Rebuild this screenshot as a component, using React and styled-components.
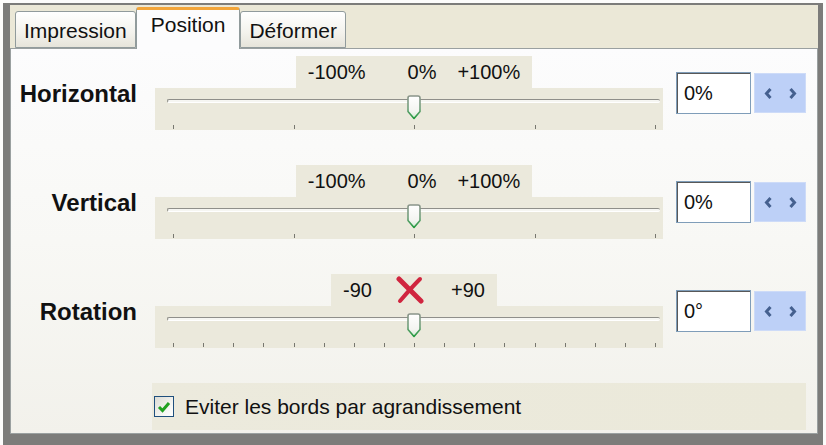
import React from "react";
import styled, { createGlobalStyle } from "styled-components";

const Global = createGlobalStyle`
  html, body {
    margin: 0;
    padding: 0;
    background: #fcfcfb;
  }
  body {
    font-family: "Liberation Sans", Arial, sans-serif;
    color: #111;
  }
`;

const Frame = styled.div`
  box-sizing: border-box;
  margin: 3px 0 0 3px;
  width: 820px;
  height: 442px;
  border-style: solid;
  border-color: #7c7c7a;
  border-width: 2px 5px 11px 7px;
  display: flex;
  flex-direction: column;
  background: #ebe8d7;
`;

const TabStrip = styled.div`
  height: 43px;
  flex: none;
  display: flex;
  align-items: flex-end;
  padding-left: 5px;
  background: #ebe8d7;
  position: relative;
  z-index: 1;
`;

const Tab = styled.div`
  box-sizing: border-box;
  height: ${(p) => (p.$active ? 42 : 37)}px;
  margin-bottom: ${(p) => (p.$active ? -1 : 0)}px;
  padding: ${(p) => (p.$active ? "4px 14px 0" : "8px 8px 0")};
  border: 1px solid #919b9c;
  border-top: ${(p) => (p.$active ? "3px solid #f2a53a" : "1px solid #919b9c")};
  border-bottom: ${(p) => (p.$active ? "none" : "1px solid #919b9c")};
  border-radius: 3px 3px 0 0;
  background: ${(p) =>
    p.$active ? "#fcfcfd" : "linear-gradient(#ffffff, #f3f2ec 60%, #e6e4da)"};
  font-size: 21px;
  line-height: 21px;
  white-space: nowrap;
`;

const Panel = styled.div`
  flex: 1;
  box-sizing: border-box;
  border: 1px solid #9aa0a0;
  background: linear-gradient(#fcfcfd, #f8f8f5 50%, #f2f1eb);
  padding: 7px 0 3px;
  display: flex;
  flex-direction: column;
  gap: 35px;
`;

const Row = styled.div`
  display: flex;
  align-items: flex-start;
  height: 74px;
`;

const Label = styled.div`
  width: 126px;
  margin: 26px 18px 0 0;
  text-align: right;
  font-weight: bold;
  font-size: 24px;
  line-height: 24px;
`;

const SliderColumn = styled.div`
  width: 518px;
  display: flex;
  flex-direction: column;
  align-items: center;
`;

const ScaleBox = styled.div`
  box-sizing: border-box;
  height: 32px;
  padding: 0 12px;
  display: flex;
  align-items: center;
  background: #ebe9dc;
  font-size: 20px;
  line-height: 20px;
`;

const ScaleMark = styled.span`
  margin-left: ${(p) => p.$gap || 0}px;
  display: flex;
  align-items: center;
`;

const SliderBox = styled.div`
  align-self: flex-start;
  box-sizing: border-box;
  width: 508px;
  height: 42px;
  padding-top: 11px;
  background: #ebe9dc;
`;

const Track = styled.div`
  position: relative;
  box-sizing: border-box;
  height: 4px;
  margin: 0 3px 0 12px;
  border-top: 1px solid #8f8f8a;
  border-left: 1px solid #8f8f8a;
  border-bottom: 1px solid #ffffff;
  border-radius: 2px;
  background: #f6f6f2;
`;

const Thumb = styled.svg`
  position: absolute;
  top: -5px;
  left: 50%;
  transform: translateX(-50%);
`;

const TickRow = styled.div`
  display: flex;
  justify-content: space-between;
  margin: 22px 7px 0 18px;
`;

const Tick = styled.span`
  width: 1px;
  height: 4px;
  background: #77776f;
`;

const ValueBox = styled.div`
  box-sizing: border-box;
  width: 75px;
  height: 42px;
  margin: 16px 0 0 3px;
  padding-left: 7px;
  display: flex;
  align-items: center;
  border: 1px solid #7f9db9;
  box-shadow: inset 1px 1px 0 #585858;
  background: #ffffff;
  font-size: 20px;
`;

const Spin = styled.div`
  box-sizing: border-box;
  width: 52px;
  height: 40px;
  margin: 17px 0 0 3px;
  display: flex;
  align-items: center;
  justify-content: center;
  gap: 15px;
  background: #bdd0f7;
  border: 1px solid #cddbf8;
`;

const CheckRow = styled.div`
  box-sizing: border-box;
  width: 654px;
  height: 47px;
  margin-left: 141px;
  padding-left: 2px;
  display: flex;
  align-items: center;
  background: linear-gradient(90deg, #eceadd, #ebe9da);
`;

const CheckBox = styled.span`
  box-sizing: border-box;
  width: 20px;
  height: 21px;
  display: flex;
  align-items: center;
  justify-content: center;
  border: 1px solid #1f4f7d;
  background: linear-gradient(135deg, #dcdcd5, #f7f7f4 70%, #ffffff);
`;

const CheckText = styled.span`
  margin-left: 11px;
  font-size: 21px;
`;

const ThumbIcon = () => (
  <Thumb width="15" height="25" viewBox="0 0 15 25">
    <defs>
      <linearGradient id="thumbStroke" x1="0" y1="0" x2="0" y2="1">
        <stop offset="0" stopColor="#8a948a" />
        <stop offset="0.55" stopColor="#6fa07a" />
        <stop offset="1" stopColor="#1f9a3c" />
      </linearGradient>
      <linearGradient id="thumbFill" x1="0" y1="0" x2="0" y2="1">
        <stop offset="0" stopColor="#ffffff" />
        <stop offset="0.7" stopColor="#f3f4f0" />
        <stop offset="1" stopColor="#cfe9d2" />
      </linearGradient>
    </defs>
    <path
      d="M1.5 3 Q1.5 1 3.5 1 H11.5 Q13.5 1 13.5 3 V16.5 L7.5 23.5 L1.5 16.5 Z"
      fill="url(#thumbFill)"
      stroke="url(#thumbStroke)"
      strokeWidth="1.6"
      strokeLinejoin="round"
    />
  </Thumb>
);

const Chevron = ({ dir }) => (
  <svg width="9" height="13" viewBox="0 0 9 13">
    <path
      d={dir === "left" ? "M6.5 2 L2.5 6.5 L6.5 11" : "M2.5 2 L6.5 6.5 L2.5 11"}
      fill="none"
      stroke="#45608f"
      strokeWidth="3"
    />
  </svg>
);

const CrossIcon = () => (
  <svg width="28" height="28" viewBox="0 0 28 28">
    <path d="M3 3 C10 10 18 18 25 25" stroke="#d0253f" strokeWidth="5" strokeLinecap="round" fill="none" />
    <path d="M24 3 C17 10 10 18 4 25" stroke="#d0253f" strokeWidth="4" strokeLinecap="round" fill="none" />
  </svg>
);

const CheckMark = () => (
  <svg width="14" height="14" viewBox="0 0 14 14">
    <path d="M2 7 L5.5 10.5 L12 3" fill="none" stroke="#21a121" strokeWidth="3" />
  </svg>
);

const sliders = [
  {
    label: "Horizontal",
    value: "0%",
    ticks: 5,
    marks: [
      { text: "-100%" },
      { text: "0%", gap: 42 },
      { text: "+100%", gap: 21 },
    ],
  },
  {
    label: "Vertical",
    value: "0%",
    ticks: 5,
    marks: [
      { text: "-100%" },
      { text: "0%", gap: 42 },
      { text: "+100%", gap: 21 },
    ],
  },
  {
    label: "Rotation",
    value: "0°",
    ticks: 17,
    marks: [
      { text: "-90" },
      { icon: true, gap: 24 },
      { text: "+90", gap: 27 },
    ],
  },
];

const SliderRow = ({ label, value, ticks, marks }) => (
  <Row>
    <Label>{label}</Label>
    <SliderColumn>
      <ScaleBox>
        {marks.map((m, i) => (
          <ScaleMark key={i} $gap={m.gap}>
            {m.icon ? <CrossIcon /> : m.text}
          </ScaleMark>
        ))}
      </ScaleBox>
      <SliderBox>
        <Track>
          <ThumbIcon />
        </Track>
        <TickRow>
          {Array.from({ length: ticks }, (_, i) => (
            <Tick key={i} />
          ))}
        </TickRow>
      </SliderBox>
    </SliderColumn>
    <ValueBox>{value}</ValueBox>
    <Spin>
      <Chevron dir="left" />
      <Chevron dir="right" />
    </Spin>
  </Row>
);

export default function App() {
  return (
    <>
      <Global />
      <Frame>
        <TabStrip>
          <Tab>Impression</Tab>
          <Tab $active>Position</Tab>
          <Tab>Déformer</Tab>
        </TabStrip>
        <Panel>
          {sliders.map((s) => (
            <SliderRow key={s.label} {...s} />
          ))}
          <CheckRow>
            <CheckBox>
              <CheckMark />
            </CheckBox>
            <CheckText>Eviter les bords par agrandissement</CheckText>
          </CheckRow>
        </Panel>
      </Frame>
    </>
  );
}
